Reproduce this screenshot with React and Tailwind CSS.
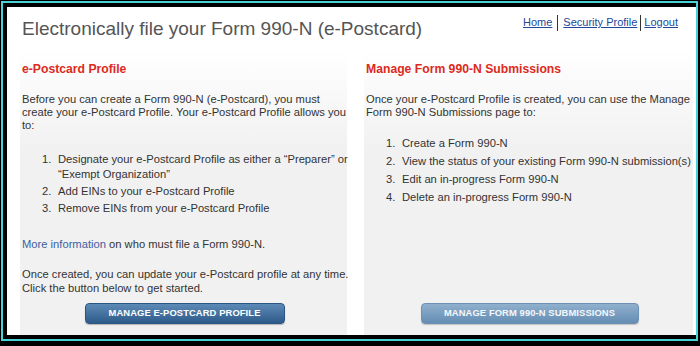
export default function App() {
  const font = { fontFamily: '"Liberation Sans", Arial, sans-serif' };

  return (
    <div
      className="w-[700px] h-[346px] bg-black pt-[1px] pl-[1px] pr-[2px] pb-[5px]"
      style={font}
    >
      <div className="h-full border-2 border-[#48d2d6] bg-black pt-[4px] pl-[4px] pb-[4px]">
        <div className="h-full bg-white flex flex-col">
          {/* header */}
          <div className="flex justify-between h-[43px] shrink-0">
            <h1 className="ml-[15px] mt-[11px] text-[19px] leading-[22px] text-[#555555]">
              Electronically file your Form 990-N (e-Postcard)
            </h1>
            <div className="mr-[18px] mt-[8px] flex items-start text-[11px] leading-[15px] text-[#24479a]">
              <a href="#" className="underline">Home</a>
              <span className="mx-[5px] w-px h-[16px] bg-[#333]" />
              <a href="#" className="underline">Security Profile</a>
              <span className="mx-[3px] w-px h-[16px] bg-[#333]" />
              <a href="#" className="underline">Logout</a>
            </div>
          </div>

          {/* columns */}
          <div className="flex-1 flex pl-[13px] pr-[3px] gap-[17px] text-[11.2px] text-[#333333]">
            <div className="w-[327px] pl-[2px] flex flex-col bg-linear-to-b from-white from-0% to-[#f1f1f1] to-35%">
              <h2 className="mt-[11px] text-[12.2px] leading-[16px] font-bold text-[#dc2a20]">
                e-Postcard Profile
              </h2>
              <p className="mt-[16px] leading-[13px] whitespace-nowrap">
                Before you can create a Form 990-N (e-Postcard), you must
                <br />
                create your e-Postcard Profile. Your e-Postcard Profile allows you
                <br />
                to:
              </p>
              <ol className="mt-[20px] ml-[20px] flex flex-col gap-[2px] leading-[15px]">
                <li className="flex">
                  <span className="w-[16px] shrink-0">1.</span>
                  <span className="whitespace-nowrap">
                    Designate your e-Postcard Profile as either a “Preparer” or
                    <br />
                    “Exempt Organization”
                  </span>
                </li>
                <li className="flex">
                  <span className="w-[16px] shrink-0">2.</span>
                  <span>Add EINs to your e-Postcard Profile</span>
                </li>
                <li className="flex">
                  <span className="w-[16px] shrink-0">3.</span>
                  <span>Remove EINs from your e-Postcard Profile</span>
                </li>
              </ol>
              <p className="mt-[22px] leading-[13px]">
                <a href="#" className="text-[#3d5f9e]">More information</a> on who
                must file a Form 990-N.
              </p>
              <p className="mt-[16px] leading-[14px] whitespace-nowrap">
                Once created, you can update your e-Postcard profile at any time.
                <br />
                Click the button below to get started.
              </p>
              <button className="mt-auto mb-[11px] self-center w-[200px] h-[21px] rounded-[4px] border border-[#2b5682] bg-linear-to-b from-[#5d8ab5] to-[#2d5b8a] text-white text-[9.4px] font-bold tracking-[0.1px] shadow-[0_1px_1px_rgba(0,0,0,0.25)]">
                MANAGE E-POSTCARD PROFILE
              </button>
            </div>

            <div className="w-[329px] pl-[2px] flex flex-col bg-linear-to-b from-white from-0% to-[#f1f1f1] to-35%">
              <h2 className="mt-[11px] text-[12.2px] leading-[16px] font-bold text-[#dc2a20]">
                Manage Form 990-N Submissions
              </h2>
              <p className="mt-[16px] leading-[13px] whitespace-nowrap">
                Once your e-Postcard Profile is created, you can use the Manage
                <br />
                Form 990-N Submissions page to:
              </p>
              <ol className="mt-[17px] ml-[20px] flex flex-col gap-[3px] leading-[15px]">
                <li className="flex">
                  <span className="w-[16px] shrink-0">1.</span>
                  <span>Create a Form 990-N</span>
                </li>
                <li className="flex">
                  <span className="w-[16px] shrink-0">2.</span>
                  <span className="whitespace-nowrap">
                    View the status of your existing Form 990-N submission(s)
                  </span>
                </li>
                <li className="flex">
                  <span className="w-[16px] shrink-0">3.</span>
                  <span>Edit an in-progress Form 990-N</span>
                </li>
                <li className="flex">
                  <span className="w-[16px] shrink-0">4.</span>
                  <span>Delete an in-progress Form 990-N</span>
                </li>
              </ol>
              <button className="mt-auto mb-[11px] self-center w-[218px] h-[21px] rounded-[4px] border border-[#6d91b4] bg-linear-to-b from-[#90b0cd] to-[#658db4] text-[#f4f7fa] text-[9.4px] font-bold tracking-[0.1px] shadow-[0_1px_1px_rgba(0,0,0,0.2)]">
                MANAGE FORM 990-N SUBMISSIONS
              </button>
            </div>
          </div>
        </div>
      </div>
    </div>
  );
}
